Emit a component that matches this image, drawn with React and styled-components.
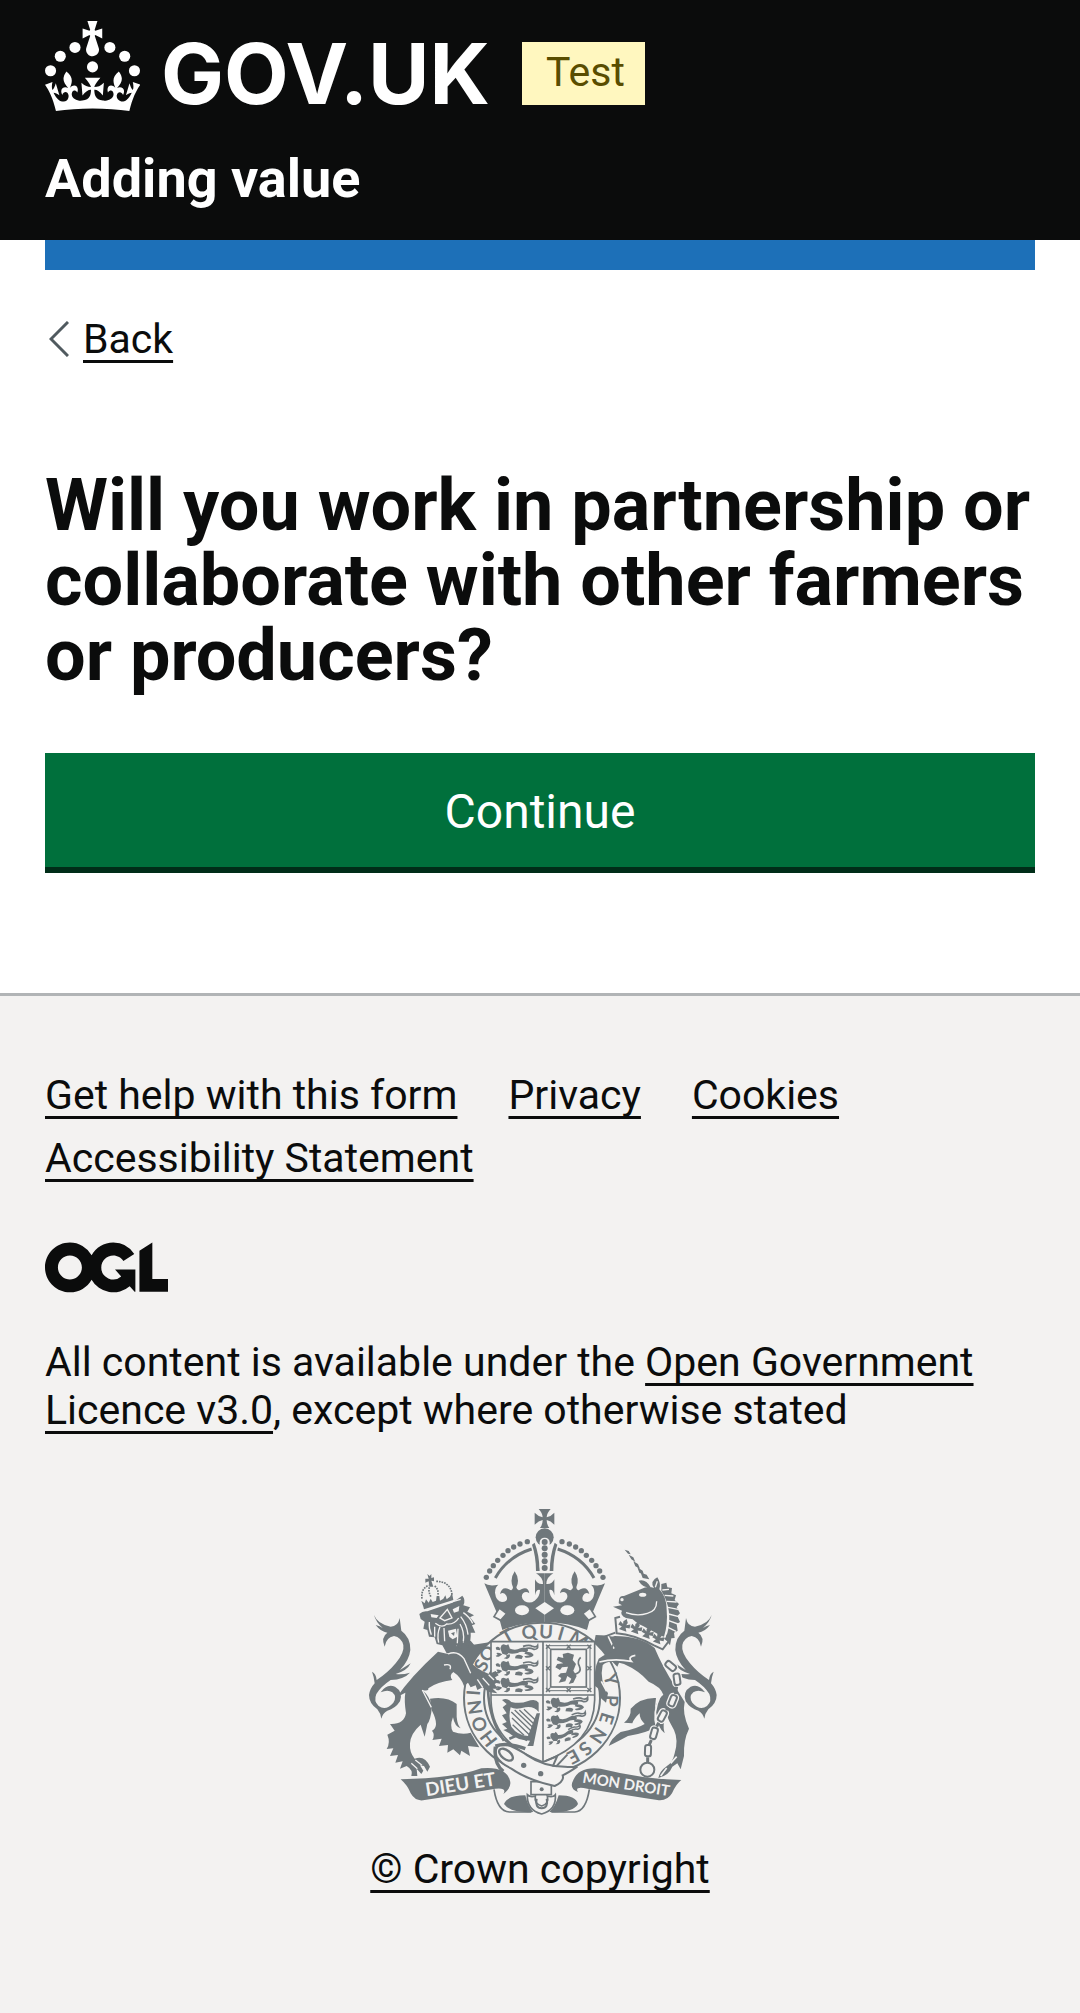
import React from "react";
import styled, { createGlobalStyle } from "styled-components";

const ink = "#0b0c0c";
const paper = "#f3f2f1";
const crest = "#6f777b";

const GlobalStyle = createGlobalStyle`
  *, *::before, *::after { box-sizing: border-box; }
  body {
    margin: 0;
    background: ${paper};
    color: ${ink};
    font-family: Roboto, "Liberation Sans", Arial, sans-serif;
    font-size: 41px;
    line-height: 48px;
  }
`;

const Link = styled.a`
  color: ${ink};
  text-decoration: underline;
  text-decoration-thickness: 3px;
  text-decoration-skip-ink: none;
  text-underline-offset: 7px;
`;

const Header = styled.header`
  background: ${ink};
  color: #ffffff;
  padding: 21px 45px 30px;
`;

const BrandRow = styled.div`
  display: flex;
  align-items: flex-start;
  gap: 32px;
`;

const HomeLink = styled.a`
  display: flex;
  align-items: flex-start;
  gap: 21px;
  color: #ffffff;
  text-decoration: none;
`;

const Wordmark = styled.span`
  font-family: Inter, sans-serif;
  font-size: 84px;
  font-weight: 700;
  line-height: 105px;
`;

const Phase = styled.strong`
  margin-top: 21px;
  padding: 6px 20px 9px 24px;
  background: #fff7bf;
  color: #594d00;
  font-weight: 400;
`;

const ServiceName = styled.a`
  display: block;
  margin-top: 21px;
  color: #ffffff;
  font-size: 54px;
  font-weight: 700;
  line-height: 63px;
  text-decoration: none;
`;

const Page = styled.div`
  background: #ffffff;
  padding: 0 45px 126px;
`;

const BlueBar = styled.div`
  height: 30px;
  background: #1d70b8;
`;

const BackLink = styled(Link)`
  display: flex;
  align-items: center;
  gap: 14px;
  width: fit-content;
  margin-top: 45px;
  padding-left: 4px;
`;

const Title = styled.h1`
  margin: 105px 0 60px;
  font-size: 72px;
  font-weight: 700;
  line-height: 75px;
`;

const Submit = styled.button`
  display: block;
  width: 100%;
  margin: 0;
  padding: 30px 30px 27px;
  border: 0;
  background: #00703c;
  box-shadow: 0 6px 0 #002d18;
  color: #ffffff;
  font: inherit;
  font-size: 48px;
  line-height: 57px;
`;

const Footer = styled.footer`
  border-top: 3px solid #b1b4b6;
  background: ${paper};
  padding: 75px 45px 120px;
`;

const FooterLinks = styled.ul`
  display: flex;
  flex-wrap: wrap;
  gap: 15px 51px;
  margin: 0 0 60px;
  padding: 0;
  list-style: none;
`;

const OglLogo = styled.svg`
  display: block;
  margin-bottom: 45px;
`;

const Licence = styled.p`
  margin: 0 0 75px;
`;

const Copyright = styled(Link)`
  display: flex;
  flex-direction: column;
  align-items: center;
  gap: 30px;
`;

const CrestText = styled.text`
  font-family: Lato, sans-serif;
  font-size: ${(p) => p.$size}px;
  font-weight: 700;
  text-anchor: middle;
`;

const GovCrown = () => (
  <svg width="95" height="90" viewBox="0 0 63.4 60" fill="#ffffff" aria-hidden="true">
    <circle cx="3.7" cy="33.2" r="3.7" />
    <circle cx="10.2" cy="23.5" r="3.7" />
    <circle cx="20" cy="17.6" r="3.7" />
    <circle cx="31.7" cy="30.6" r="3.7" />
    <circle cx="43.3" cy="17.6" r="3.7" />
    <circle cx="53.2" cy="23.5" r="3.7" />
    <circle cx="59.7" cy="33.2" r="3.7" />
    <path d="M33.1,9.8c.2-.1.3-.3.5-.5l4.6,2.4v-6.8l-4.6,1.5c-.1-.2-.3-.3-.5-.5l1.9-5.9h-6.7l1.9,5.9c-.2.1-.3.3-.5.5l-4.6-1.5v6.8l4.6-2.4c.1.2.3.3.5.5l-2.6,8c-.9,2.8,1.2,5.7,4.1,5.7h0c3,0,5.1-2.9,4.1-5.7l-2.6-8ZM37,37.9s-3.4,3.8-4.1,6.1c2.2,0,4.2-.5,6.4-2.8l-.7,8.5c-2-2.8-4.4-4.1-5.7-3.8.1,3.1.5,6.7,5.8,7.2,3.7.3,6.7-1.5,7-3.8.4-2.6-2-4.3-3.7-1.6-1.4-4.5,2.4-6.1,4.9-3.2-1.9-4.5-1.8-7.7,2.4-10.9,3,4,2.6,7.3-1.2,11.1,2.4-1.3,6.2,0,4,4.6-1.2-2.8-3.7-2.2-4.2.2-.3,1.7.7,3.7,3,4.2,1.9.3,4.7-.9,7-5.9-1.3,0-2.4.7-3.9,1.7l2.4-8c.6,2.3,1.4,3.7,2.2,4.5.6-1.6.5-2.8,0-5.3l5,1.8c-2.6,3.6-5.2,8.7-7.3,17.5-7.4-1.1-15.7-1.7-24.5-1.7h0c-8.8,0-17.1.6-24.5,1.7-2.1-8.9-4.7-13.9-7.3-17.5l5-1.8c-.5,2.5-.6,3.7,0,5.3.8-.8,1.6-2.3,2.2-4.5l2.4,8c-1.5-1-2.6-1.7-3.9-1.7,2.3,5,5.2,6.2,7,5.9,2.3-.4,3.3-2.4,3-4.2-.5-2.4-3-3.1-4.2-.2-2.2-4.6,1.6-6,4-4.6-3.7-3.7-4.2-7.1-1.2-11.1,4.2,3.2,4.3,6.4,2.4,10.9,2.5-2.8,6.3-1.3,4.9,3.2-1.8-2.7-4.1-1-3.7,1.6.3,2.3,3.3,4.1,7,3.8,5.4-.5,5.7-4.2,5.8-7.2-1.3-.2-3.7,1-5.7,3.8l-.7-8.5c2.2,2.3,4.2,2.7,6.4,2.8-.7-2.3-4.1-6.1-4.1-6.1h10.6Z" />
  </svg>
);

const Ogl = () => (
  <OglLogo width="123" height="51" viewBox="0 0 483 196" fill={ink} role="img" aria-label="Open Government Licence">
    <path d="M421.5 142.8V.1l-50.7 32.3v161.1h112.4v-50.7zm-122.3-9.6A47.12 47.12 0 0 1 221 97.8c0-26 21.1-47.1 47.1-47.1 16.7 0 31.4 8.7 39.7 21.8l42.7-27.2A97.63 97.63 0 0 0 268.1 0c-36.5 0-68.3 20.1-85.1 49.7A98 98 0 0 0 97.8 0C43.9 0 0 43.9 0 97.8s43.9 97.8 97.8 97.8c36.5 0 68.3-20.1 85.1-49.7a97.76 97.76 0 0 0 149.6 25.4l19.4 22.2h3v-87.8h-80l24.3 27.5zM97.8 145c-26 0-47.1-21.1-47.1-47.1s21.1-47.1 47.1-47.1 47.1 21.1 47.1 47.1S123.8 145 97.8 145" />
  </OglLogo>
);

/* Letters of the garter motto: character, centre x, centre y. */
const motto = [
  ["H", 384, 716], ["O", 356, 672], ["N", 343, 622], ["I", 338, 578],
  ["S", 362, 496], ["O", 380, 460], ["T", 440, 408], ["Q", 505, 396],
  ["U", 556, 395], ["I", 601, 400], ["M", 655, 418], ["Y", 752, 538],
  ["P", 752, 602], ["E", 738, 655], ["N", 712, 706], ["S", 674, 746], ["E", 638, 770],
];

const beads = [[500, 125], [478, 132], [459, 141], [442, 152], [427, 166], [411, 181], [398, 197], [387, 213], [377, 232]];

const tailPath = "M40 345Q50 372 90 380Q112 380 117 354L122 392Q150 412 149 450Q146 480 118 510L150 490Q140 512 105 522Q125 525 148 518Q130 538 90 540Q60 560 47 582Q38 604 54 618Q76 633 98 608Q110 590 95 577Q82 567 60 577Q78 550 103 560Q128 575 118 604Q104 626 80 632Q66 640 62 656Q60 640 50 628Q25 610 25 585Q28 565 42 550Q40 530 34 515Q46 520 48 540Q80 520 105 490Q132 458 128 435Q122 412 100 408Q76 412 72 440Q60 412 80 398Q60 395 45 375Q58 378 66 384Q45 365 40 345Z";

/* A lion walking left, drawn in a 130 by 46 box. */
const Passant = ({ x, y, s = 1, r = 0 }) => (
  <g transform={`translate(${x} ${y}) rotate(${r}) scale(${s})`}>
    <path d="M20 2L26 0L34 3L40 0L44 10Q44 26 34 32L22 28L16 12Z" />
    <path d="M42 12Q60 20 76 12Q90 6 98 14Q102 22 92 24Q78 20 68 26Q50 30 38 26Z" />
    <path d="M2 10Q8 4 14 10L16 18L4 16M4 26Q14 24 22 30L14 36Q6 40 2 34L8 32ZM34 32L44 30Q48 40 36 44L26 42L34 38Z" />
    <path d="M92 22Q112 22 116 32Q110 42 92 40L88 36L104 33L88 28ZM62 34Q74 28 84 36L80 44L60 42Z" />
    <path d="M84 6Q104 0 112 6Q124 10 128 3Q130 16 116 15Q104 8 88 14" fill="none" stroke={crest} strokeWidth="5" />
  </g>
);

const ChainLink = ({ x, y, r }) => (
  <g transform={`translate(${x} ${y}) rotate(${r})`} fill="none">
    <rect x={-9} y={-17} width="18" height="34" rx="7" stroke={paper} strokeWidth="14" />
    <rect x={-9} y={-17} width="18" height="34" rx="7" fill={paper} stroke={crest} strokeWidth="6" />
  </g>
);

const CollarFleur = ({ x, y }) => (
  <g transform={`translate(${x} ${y}) rotate(20)`}>
    <path d="M0 -18L7 -8L5 0L16 -6L18 6L6 8L12 18H-12L-6 8L-18 6L-16 -6L-5 0L-7 -8Z" />
  </g>
);

const CrownHalf = () => (
  <g>
    {beads.map(([x, y]) => <circle key={x} cx={x} cy={y} r="8" />)}
    <path d="M513 147Q440 170 404 234" fill="none" stroke={crest} strokeWidth="9" />
    <path d="M514 134L522 128Q536 165 537 213H526Q526 170 514 134Z" />
    <path d="M552 366Q480 368 425 390L416 356L371 250Q385 260 413 254Q403 262 403 278Q406 304 424 306Q445 304 437 287Q430 274 418 282Q424 258 445 268Q456 276 457 262Q446 238 462 214Q479 238 467 262Q470 276 482 268Q502 258 506 280Q496 272 487 280Q478 292 492 304Q508 312 522 302Q538 290 538 270Q527 267 523 286V238Q530 254 547 252Q547 232 526 220H552Z" />
    <ellipse cx="484" cy="331" rx="21" ry="15" fill={paper} />
    <path d="M416 324L438 341L420 361L400 350Z" fill={paper} stroke={crest} strokeWidth="5" />
  </g>
);

const RoyalArms = () => (
  <svg width="375" height="306" viewBox="-23 27 1125 918" fill={crest} aria-hidden="true">
    {/* shoulders behind the garter */}
    <path d="M300 440L395 425L360 470L330 500ZM705 405Q770 405 800 430L770 500L700 430Z" />

    {/* garter */}
    <ellipse cx="544" cy="594" rx="234" ry="226" fill={paper} stroke={crest} strokeWidth="6" />
    <ellipse cx="544" cy="594" rx="174" ry="164" fill="none" stroke={crest} strokeWidth="6" />
    <path d="M382 570Q386 660 430 722" fill="none" stroke={crest} strokeWidth="8" />
    {motto.map(([c, x, y], i) => {
      const a = (Math.atan2(y - 594, x - 544) * 180) / Math.PI + 90;
      return (
        <CrestText key={i} $size={56} y="20" transform={`translate(${x} ${y}) rotate(${a})`}>{c}</CrestText>
      );
    })}

    {/* shield */}
    <path d="M391 425H702V600Q700 730 547 786Q394 730 391 600Z" fill={paper} stroke={crest} strokeWidth="5" />
    <path d="M547 425V786M391 585H702" stroke={crest} strokeWidth="5" />
    <Passant x={403} y={433} />
    <Passant x={403} y={483} />
    <Passant x={403} y={533} />
    <Passant x={553} y={594} r={-2} />
    <Passant x={553} y={650} r={-8} s={0.95} />
    <Passant x={553} y={706} r={-18} s={0.85} />
    <g fill="none" stroke={crest}>
      <rect x="559" y="437" width="129" height="135" strokeWidth="3" />
      <rect x="570" y="448" width="107" height="113" strokeWidth="5" />
    </g>
    {[[562, 440], [624, 440], [686, 440], [562, 505], [686, 505], [562, 570], [624, 570], [686, 570]].map(([x, y], i) => (
      <path key={i} d={`M${x - 6} ${y - 6}l12 12m0 -12l-12 12`} stroke={crest} strokeWidth="4" />
    ))}
    <path d="M606 462L622 458L640 464L636 480L646 492L638 512L648 528L638 548L624 552L632 536L620 528L614 544L594 548L602 534L592 528L600 520L616 518L622 500L604 502L598 510L584 502L590 492L608 490L588 480L592 470L608 474Z" />
    <path d="M636 524Q666 520 656 498Q648 484 660 472" fill="none" stroke={crest} strokeWidth="5" />

    {/* harp */}
    <path d="M424 600Q440 592 452 606Q480 612 500 604Q525 594 534 608V636Q520 618 494 622Q465 630 450 622Q442 650 452 680Q470 706 502 708L528 640L538 640L518 738H500L508 722Q470 722 446 700L428 690L440 686L424 672L438 666L424 646L438 640L426 622L438 612Z" />
    <path d="M452 636L512 694M454 654L506 704M456 674L490 706M462 630L516 682M476 630L520 672M490 628L524 660" stroke={crest} strokeWidth="4" />
    <path d="M446 716L470 706L500 720" fill="none" stroke={crest} strokeWidth="8" />

    {/* crown */}
    <CrownHalf />
    <g transform="translate(1104 0) scale(-1 1)"><CrownHalf /></g>
    <path d="M534 27H570Q558 40 558 52Q570 50 581 38V74Q570 62 558 60Q558 74 566 84H538Q546 74 546 60Q534 62 522 74V38Q534 50 546 52Q546 40 534 27Z" />
    <circle cx="552" cy="112" r="27" />
    <rect x="537" y="113" width="30" height="102" rx="14" fill={paper} />
    {[126, 145, 164, 184, 204].map((y) => <circle key={y} cx="552" cy={y} r="9" />)}
    <path d="M552 306L580 325L552 344L524 325Z" fill={paper} />

    {/* lion */}
    <path d={tailPath} />
    <path d="M232 455L262 462Q292 425 330 422L345 440Q325 460 322 478Q345 508 385 522L405 513L414 526L403 532L412 546L402 552L412 566L396 566L410 580L384 576L366 562L350 570L345 556L330 562L322 548L310 558Q300 530 278 516Q264 526 275 540Q230 545 203 565Q205 575 185 570Q208 590 214 620Q210 660 200 672L192 710Q185 690 180 674Q150 700 148 730Q146 758 162 776Q192 764 208 800L200 815L190 798L178 796L188 812L182 822L168 806L170 828L152 828Q158 810 138 798L118 806L126 784L104 788L112 765L88 768L98 745L78 747Q90 728 80 704L102 692L88 672Q130 674 136 640Q130 600 134 578L108 592Q150 530 232 455Z" />
    <path d="M208 596Q260 588 288 612L288 650Q290 675 300 685Q282 680 277 652Q266 680 277 695Q305 706 330 698L356 742L322 738L328 768L302 752L298 766L278 748L260 758L262 735L235 738L243 716L215 720Q224 704 214 692Q238 680 214 632Z" />
    <path d="M176 342Q186 332 200 334L275 308L305 287Q316 300 308 316L328 322L320 335L340 346L328 352L344 372L334 376L344 398L330 398Q332 420 322 444L308 424L300 448L288 436L282 458L258 460L245 436L228 432L222 412L205 410L200 390L188 386L192 365L180 357Z" />
    <g fill={paper}>
      <path d="M210 342L234 346L228 354L212 352ZM276 328L296 318L294 334L280 338Z" />
      <path d="M262 392L286 386L290 410L276 418L266 410Z" />
    </g>
    <path d="M271 400L282 396L280 408Z" />
    <g fill="none" stroke={paper} strokeWidth="4">
      <path d="M186 330L300 298M238 354L260 328L274 354L252 362ZM224 370Q244 386 258 372Q282 374 294 354M238 380Q228 402 234 428M250 384L252 424M300 350Q318 372 322 404M308 338Q326 350 336 370M298 372Q312 396 308 424M292 386L290 430M206 366Q204 384 212 404M222 380L222 410" />
      <path d="M262 462Q290 450 310 476L330 520M250 495Q275 490 268 508M384 524L400 540M366 534L386 556M350 538L366 562M185 570L212 622M152 790L170 806M164 780L184 796" />
    </g>
    <path d="M188 320L182 302L192 310L196 298L204 308L210 296L216 306L226 302L228 288L236 288L238 302L248 296L254 286L258 298L268 290L274 278L278 300L190 328Z" />
    <path d="M184 296Q180 266 204 256M274 284Q270 244 224 244M206 262Q202 276 212 292M222 258Q234 268 232 284" fill="none" stroke={crest} strokeWidth="5" strokeDasharray="5 3" />
    <path d="M200 222L207 228L212 222L212 234L220 232V244L212 242L218 260H206L204 244L194 248V236L204 236Z" />

    {/* unicorn */}
    <g transform="translate(1093 0) scale(-1 1)"><path d={tailPath} /></g>
    <path d="M792 149L804 153L810 163L802 161ZM804 164L818 172L824 186L812 178ZM818 184L832 192L838 206L824 199ZM830 202L846 212L850 224L836 218ZM840 218L858 224L866 238L846 234Z" />
    <path d="M834 242Q856 236 870 262Q846 264 834 242ZM775 300Q776 286 790 288L840 268Q862 256 880 264Q866 244 890 232Q902 250 896 268Q918 290 918 330Q922 372 910 410Q856 396 816 358L796 354Q776 344 784 332L757 320L784 316L774 310Z" />
    <path d="M902 252L917 248L920 262L934 264L932 280L946 286L942 300L955 312L948 322L958 340L950 348L958 366L948 372L951 392L940 398L942 414L932 415L928 436Q908 415 920 400Q938 330 902 272Z" />
    <path d="M905 270L925 268M912 286L938 288M918 304L948 306M922 322L952 328M924 342L954 350M924 362L952 372M922 382L946 394M890 244L884 262M796 338Q830 350 860 340Q888 334 888 304" fill="none" stroke={paper} strokeWidth="4" />
    <ellipse cx="846" cy="284" rx="11" ry="6" fill={paper} />
    <circle cx="784" cy="299" r="5" fill={paper} />
    <path d="M766 352L778 350Q840 368 924 422L906 448L880 436Q820 404 768 400Z" fill={paper} />
    <path d="M778 350L764 354L768 400Q820 404 880 436L906 448L924 424L912 414" fill="none" stroke={crest} strokeWidth="6" />
    <CollarFleur x={792} y={374} />
    <CollarFleur x={828} y={382} />
    <CollarFleur x={862} y={396} />
    <CollarFleur x={894} y={412} />
    <path d="M736 418L762 408Q840 408 882 444Q905 500 945 562L972 606Q964 640 985 686Q968 720 970 768L960 808L950 790L935 800Q925 826 893 834Q898 812 916 800Q936 790 942 760Q954 720 940 690Q924 664 916 640Q904 680 912 700Q892 684 890 650Q874 612 908 584Q900 560 864 545Q835 512 790 492Q740 476 726 496Q716 540 742 580L736 608L716 590Q722 568 703 558Q698 510 714 476Q735 460 765 452Z" />
    <path d="M810 626Q840 592 886 594Q878 650 888 680Q860 698 802 708Q770 725 744 738Q752 714 780 696Q830 686 852 672Q836 656 837 640Q820 655 815 670L790 668Q812 650 810 626Z" />
    <path d="M716 486Q760 474 812 484Q800 470 824 466M900 584Q874 640 888 684M742 408L760 446M722 544L738 574M930 790L948 770M900 828L918 804" fill="none" stroke={paper} strokeWidth="5" />
    <path d="M732 410L764 398M738 420L752 444M764 424L750 448" stroke={crest} strokeWidth="6" />
    <ChainLink x={930} y={498} r={-50} />
    <ChainLink x={949} y={538} r={-8} />
    <ChainLink x={936} y={602} r={22} />
    <ChainLink x={905} y={648} r={28} />
    <ChainLink x={880} y={700} r={16} />
    <ChainLink x={862} y={752} r={2} />
    <path d="M948 560L944 582M924 622L916 630M894 668L888 680M872 720L866 734M861 772V788" stroke={crest} strokeWidth="9" />
    <circle cx="860" cy="809" r="21" fill={paper} stroke={crest} strokeWidth="6" />

    {/* ribbons */}
    <path d="M120 838Q280 835 362 805Q436 798 448 842Q454 862 428 882Q440 862 404 866Q300 884 192 900Q165 906 150 880Q140 855 120 838ZM962 840Q850 838 720 806Q656 798 638 840Q624 866 652 876Q640 858 680 866Q800 886 890 900Q920 904 934 880Q946 852 962 840Z" />
    <CrestText $size={56} fill={paper} transform="translate(302 872) rotate(-9)">DIEU ET</CrestText>
    <CrestText $size={45} fill={paper} transform="translate(794 868) rotate(9)">MON DROIT</CrestText>
    <path d="M400 868Q410 934 446 936H512M686 868Q676 934 642 936H572" fill="none" stroke={crest} strokeWidth="5" />
    <path d="M430 912Q440 886 494 886Q502 920 518 936Q450 940 430 912ZM652 912Q646 886 594 886Q584 920 566 936Q636 940 652 912Z" />

    {/* belt and buckle */}
    <path d="M511 845H572V884H511Z" fill={paper} stroke={crest} strokeWidth="5" />
    <path d="M408 770Q396 730 440 734Q480 752 500 766Q560 808 650 800Q620 820 606 826Q612 844 582 858Q500 840 452 806Q420 790 408 770Z" fill={paper} stroke={crest} strokeWidth="6" />
    <path d="M404 738Q440 726 494 746M404 740Q398 790 428 814" fill="none" stroke={crest} strokeWidth="10" />
    <ellipse cx="436" cy="764" rx="24" ry="13" transform="rotate(38 436 764)" fill={paper} stroke={crest} strokeWidth="7" />
    <circle cx="489" cy="796" r="8" /><circle cx="540" cy="821" r="8" /><circle cx="543" cy="868" r="6" />
    <path d="M552 784L590 768L576 800M586 800L620 764" fill="none" stroke={crest} strokeWidth="6" />
    <path d="M500 884Q510 894 524 888Q520 912 543 918Q566 912 560 888Q576 894 584 884Q588 930 543 942Q498 930 500 884Z" fill={paper} stroke={crest} strokeWidth="5" />
    <path d="M528 896Q522 924 543 925Q564 924 558 896" fill="none" stroke={crest} strokeWidth="6" />
  </svg>
);

const footerLinks = ["Get help with this form", "Privacy", "Cookies", "Accessibility Statement"];

export default function App() {
  return (
    <>
      <GlobalStyle />
      <Header>
        <BrandRow>
          <HomeLink href="#">
            <GovCrown />
            <Wordmark>GOV.UK</Wordmark>
          </HomeLink>
          <Phase>Test</Phase>
        </BrandRow>
        <ServiceName href="#">Adding value</ServiceName>
      </Header>
      <Page>
        <BlueBar />
        <BackLink href="#">
          <svg width="20" height="36" viewBox="0 0 20 36" fill="none" stroke="#505a5f" strokeWidth="3" aria-hidden="true">
            <path d="M19 1L2 18L19 35" />
          </svg>
          Back
        </BackLink>
        <main>
          <Title>Will you work in partnership or collaborate with other farmers or producers?</Title>
          <Submit type="submit">Continue</Submit>
        </main>
      </Page>
      <Footer>
        <FooterLinks>
          {footerLinks.map((label) => <li key={label}><Link href="#">{label}</Link></li>)}
        </FooterLinks>
        <Ogl />
        <Licence>
          All content is available under the <Link href="#">Open Government Licence v3.0</Link>, except where otherwise stated
        </Licence>
        <Copyright href="#">
          <RoyalArms />
          <span>© Crown copyright</span>
        </Copyright>
      </Footer>
    </>
  );
}
